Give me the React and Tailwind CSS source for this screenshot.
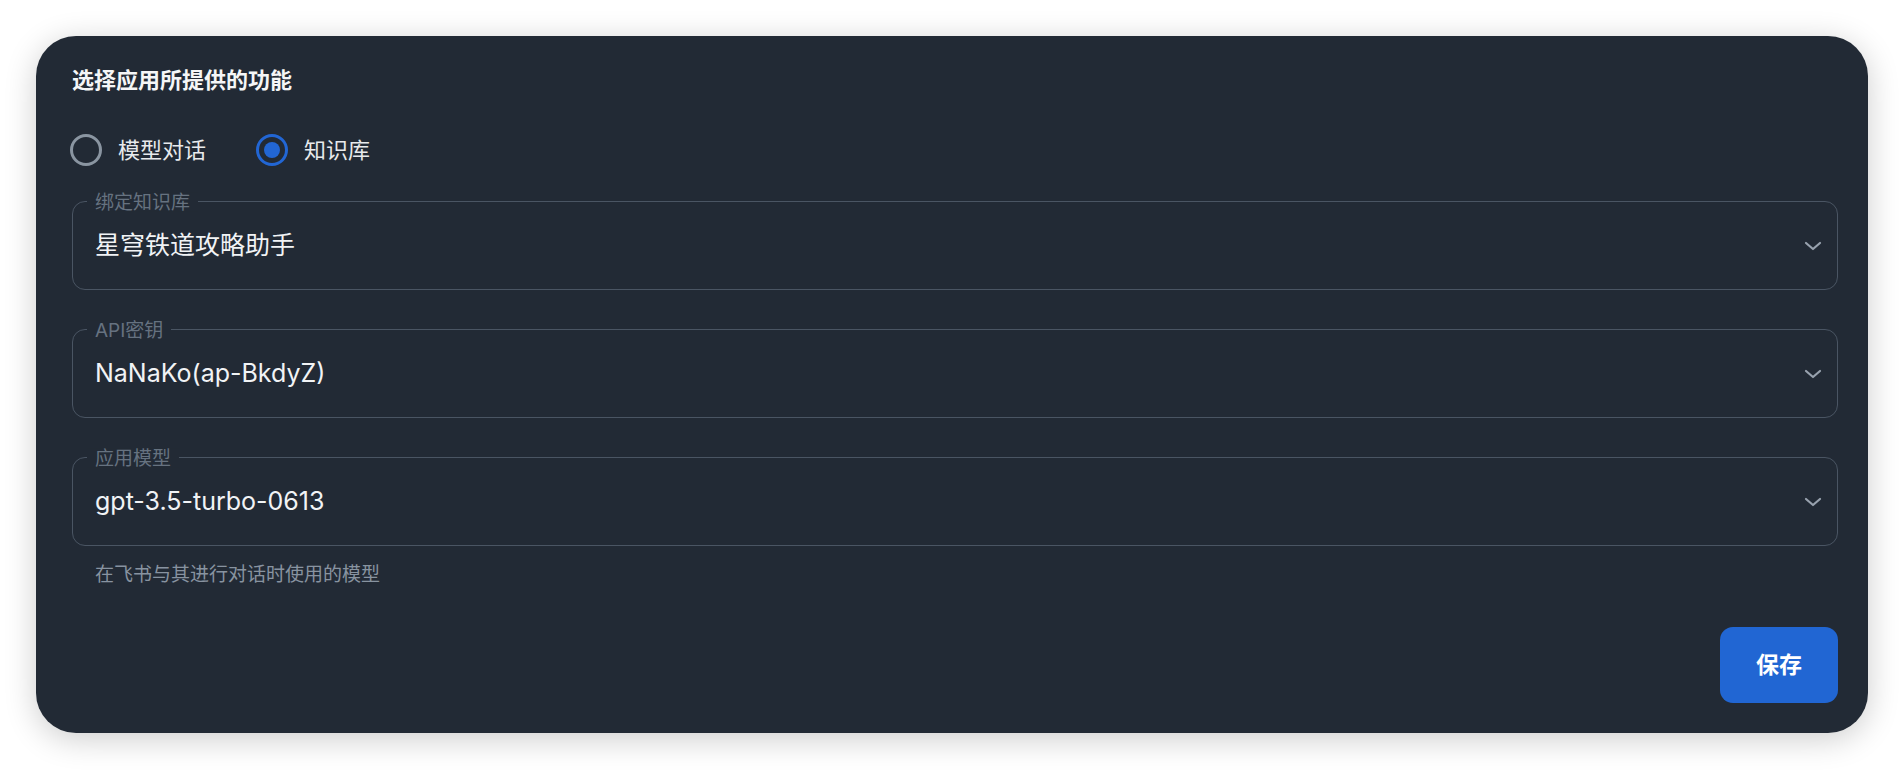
import { useState } from 'react'

const FONT = { fontFamily: 'Inter, "Noto Sans CJK SC", sans-serif' }

function Radio({ checked, label, onClick }) {
  return (
    <button type="button" onClick={onClick} className="flex items-center gap-[16px]">
      <span className={`w-8 h-8 rounded-full border-[3px] flex items-center justify-center ${checked ? 'border-[#2266d4]' : 'border-[#8a95a1]'}`}>
        {checked && <span className="w-[16px] h-[16px] rounded-full bg-[#2266d4]" />}
      </span>
      <span className="text-[22px] leading-none text-[#e8eaed]">{label}</span>
    </button>
  )
}

function Chevron() {
  return (
    <svg width="18" height="10" viewBox="0 0 18 10" fill="none">
      <path d="M2 2l7 6 7-6" stroke="#98a2ae" strokeWidth="2.2" strokeLinecap="round" strokeLinejoin="round" />
    </svg>
  )
}

function SelectField({ label, value, className = '' }) {
  return (
    <div className={`relative h-[89px] rounded-[13px] border border-[#4a5563] flex items-center justify-between pl-[22px] pr-[15px] ${className}`}>
      {/* floating label sits on the border */}
      <span className="absolute left-[14px] top-0 -translate-y-1/2 px-2 bg-[#222a35] text-[19px] leading-none text-[#667280]">
        {label}
      </span>
      <span className="text-[25px] leading-none text-[#f1f3f5]">{value}</span>
      <Chevron />
    </div>
  )
}

export default function App() {
  const [mode, setMode] = useState('kb')

  return (
    <div className="w-full h-[770px] bg-white p-9" style={FONT}>
      <div className="h-[697px] rounded-[40px] bg-[#222a35] shadow-[0_6px_32px_rgba(0,0,0,0.2)] pl-9 pr-[30px] pt-[28px] pb-[30px] flex flex-col">
        <h2 className="text-[22px] leading-[33px] font-semibold text-[#f5f6f7]">选择应用所提供的功能</h2>

        <div className="mt-[37px] -ml-[2px] h-8 flex items-center gap-[50px]">
          <Radio label="模型对话" checked={mode === 'chat'} onClick={() => setMode('chat')} />
          <Radio label="知识库" checked={mode === 'kb'} onClick={() => setMode('kb')} />
        </div>

        <SelectField className="mt-[35px]" label="绑定知识库" value="星穹铁道攻略助手" />
        <SelectField className="mt-[39px]" label="API密钥" value="NaNaKo(ap-BkdyZ)" />
        <SelectField className="mt-[39px]" label="应用模型" value="gpt-3.5-turbo-0613" />

        <p className="mt-[15px] pl-[23px] text-[19px] leading-[27px] text-[#8893a0]">在飞书与其进行对话时使用的模型</p>

        <div className="mt-[39px] flex justify-end">
          <button className="w-[118px] h-[76px] rounded-[13px] bg-[#2166d3] text-white text-[23px] font-semibold">保存</button>
        </div>
      </div>
    </div>
  )
}
